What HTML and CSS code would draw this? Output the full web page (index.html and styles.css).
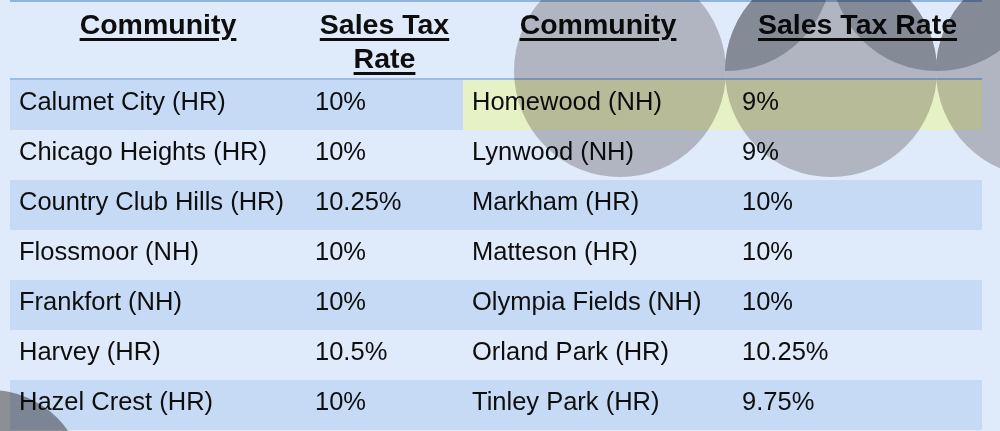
FILE: index.html
```html
<!DOCTYPE html>
<html lang="en">
<head>
<meta charset="utf-8">
<title>Sales Tax Rates</title>
<link rel="stylesheet" href="styles.css">
</head>
<body>
<div class="slide">
  <div class="table">
    <div class="row head">
      <div class="th"><span>Community</span></div>
      <div class="th"><span>Sales Tax Rate</span></div>
      <div class="th"><span>Community</span></div>
      <div class="th"><span>Sales Tax Rate</span></div>
    </div>
    <div class="row dark">
      <div class="td">Calumet City (HR)</div>
      <div class="td">10%</div>
      <div class="td hl">Homewood (NH)</div>
      <div class="td hl">9%</div>
    </div>
    <div class="row">
      <div class="td">Chicago Heights (HR)</div>
      <div class="td">10%</div>
      <div class="td">Lynwood (NH)</div>
      <div class="td">9%</div>
    </div>
    <div class="row dark">
      <div class="td">Country Club Hills (HR)</div>
      <div class="td">10.25%</div>
      <div class="td">Markham (HR)</div>
      <div class="td">10%</div>
    </div>
    <div class="row">
      <div class="td">Flossmoor (NH)</div>
      <div class="td">10%</div>
      <div class="td">Matteson (HR)</div>
      <div class="td">10%</div>
    </div>
    <div class="row dark">
      <div class="td">Frankfort (NH)</div>
      <div class="td">10%</div>
      <div class="td">Olympia Fields (NH)</div>
      <div class="td">10%</div>
    </div>
    <div class="row">
      <div class="td">Harvey (HR)</div>
      <div class="td">10.5%</div>
      <div class="td">Orland Park (HR)</div>
      <div class="td">10.25%</div>
    </div>
    <div class="row dark">
      <div class="td">Hazel Crest (HR)</div>
      <div class="td">10%</div>
      <div class="td">Tinley Park (HR)</div>
      <div class="td">9.75%</div>
    </div>
  </div>
  <svg class="deco" width="1000" height="431" viewBox="0 0 1000 431" aria-hidden="true">
    <defs>
      <clipPath id="clipB"><circle cx="831" cy="71" r="106"/></clipPath>
      <clipPath id="clipC"><circle cx="1042" cy="71" r="106"/></clipPath>
    </defs>
    <circle class="c-light" cx="620" cy="71" r="106"/>
    <circle class="c-light" cx="831" cy="71" r="106"/>
    <circle class="c-light" cx="1042" cy="71" r="106"/>
    <circle class="c-dark" cx="726" cy="-35" r="106" clip-path="url(#clipB)"/>
    <circle class="c-dark" cx="937" cy="-35" r="106" clip-path="url(#clipB)"/>
    <circle class="c-dark" cx="937" cy="-35" r="106" clip-path="url(#clipC)"/>
    <circle class="c-corner" cx="-10" cy="485" r="95"/>
  </svg>
</div>
</body>
</html>
```

FILE: styles.css
```css
html, body {
  margin: 0;
  padding: 0;
  background: #dfeafb;
}

.slide {
  position: relative;
  width: 1000px;
  height: 431px;
  overflow: hidden;
  background: #dfeafb;
  font-family: "Liberation Sans", Arial, sans-serif;
  color: #0e0e0e;
}

.table {
  margin-left: 10px;
  width: 972px;
  display: flex;
  flex-direction: column;
  border-top: 2px solid #8fb4e2;
}

.row {
  display: grid;
  grid-template-columns: 296px 157px 270px 249px;
}

.row.head {
  border-bottom: 2px solid #9bbde7;
}

.th {
  box-sizing: border-box;
  height: 76px;
  padding: 5px 9px 0;
  text-align: center;
  font-weight: bold;
  font-size: 28.5px;
  line-height: 34px;
}

.th span {
  text-decoration: underline;
  text-decoration-thickness: 2.5px;
  text-underline-offset: 4px;
}

.td {
  box-sizing: border-box;
  height: 50px;
  padding: 6px 9px 0;
  font-size: 25.5px;
  line-height: 30px;
  white-space: nowrap;
}

.row.dark .td {
  background: #c6daf6;
}

.row.dark .td.hl {
  background: #e6f1c6;
}

.deco {
  position: absolute;
  left: 0;
  top: 0;
  pointer-events: none;
  mix-blend-mode: multiply;
}

.c-light {
  fill: rgb(203, 198, 196);
}

.c-dark {
  fill: rgb(152, 150, 154);
}

.c-corner {
  fill: rgb(160, 156, 152);
}
```
